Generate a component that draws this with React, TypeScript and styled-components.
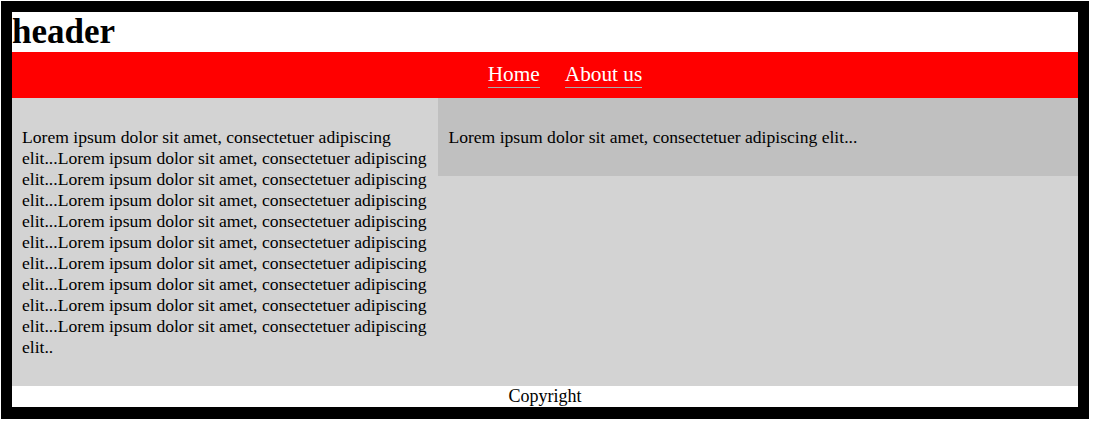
import * as React from 'react';
import styled, { createGlobalStyle } from 'styled-components';

const GlobalStyle = createGlobalStyle`
  body {
    margin: 0;
    background: #fff;
    font-family: "Liberation Serif", "Times New Roman", serif;
    font-size: 18px;
    color: #000;
  }
`;

const lorem = 'Lorem ipsum dolor sit amet, consectetuer adipiscing elit...';

const navItems = ['Home', 'About us'];

export default function App() {
  const longText = lorem.repeat(10).slice(0, -1);
  return (
    <>
      <GlobalStyle />
      <Page>
        <Header>
          <Title>header</Title>
        </Header>
        <Nav>
          <NavList>
            {navItems.map((item) => (
              <NavItem key={item}>
                <NavLink href='#'>{item}</NavLink>
              </NavItem>
            ))}
          </NavList>
        </Nav>
        <Main>
          <Sidebar>
            <Text>{longText}</Text>
          </Sidebar>
          <Content>
            <Text>{lorem}</Text>
          </Content>
        </Main>
        <Footer>Copyright</Footer>
      </Page>
    </>
  );
}

const Page = styled.div`
  margin: 1px;
  width: 1066px;
  border: 11px solid #000;
  border-bottom-width: 12px;
  display: flex;
  flex-direction: column;
`;

const Header = styled.header`
  height: 40px;
  background: #fff;
`;

const Title = styled.h1`
  margin: 0;
  font-size: 35px;
  font-weight: bold;
  line-height: 40px;
`;

const Nav = styled.nav`
  height: 46px;
  box-sizing: border-box;
  padding: 10px 0 0;
  background: #ff0000;
`;

const NavList = styled.ul`
  list-style: none;
  margin: 0;
  padding: 0 0 0 40px;
  display: flex;
  justify-content: center;
  gap: 25px;
`;

const NavItem = styled.li`
  font-size: 21.3px;
  line-height: 24px;
`;

const NavLink = styled.a`
  display: inline-block;
  color: #fff;
  text-decoration: none;
  padding-bottom: 1px;
  border-bottom: 1px solid #aaa;
`;

const Main = styled.main`
  display: flex;
  align-items: flex-start;
  background: #d3d3d3;
`;

const Sidebar = styled.section`
  width: 40%;
  box-sizing: border-box;
  padding: 10px;
`;

const Content = styled.section`
  width: 60%;
  box-sizing: border-box;
  padding: 10px;
  background: #c0c0c0;
`;

const Text = styled.p`
  margin: 19px 0 18px;
  font-size: 17.6px;
  line-height: 21px;
`;

const Footer = styled.footer`
  height: 21px;
  line-height: 21px;
  text-align: center;
  background: #fff;
`;
